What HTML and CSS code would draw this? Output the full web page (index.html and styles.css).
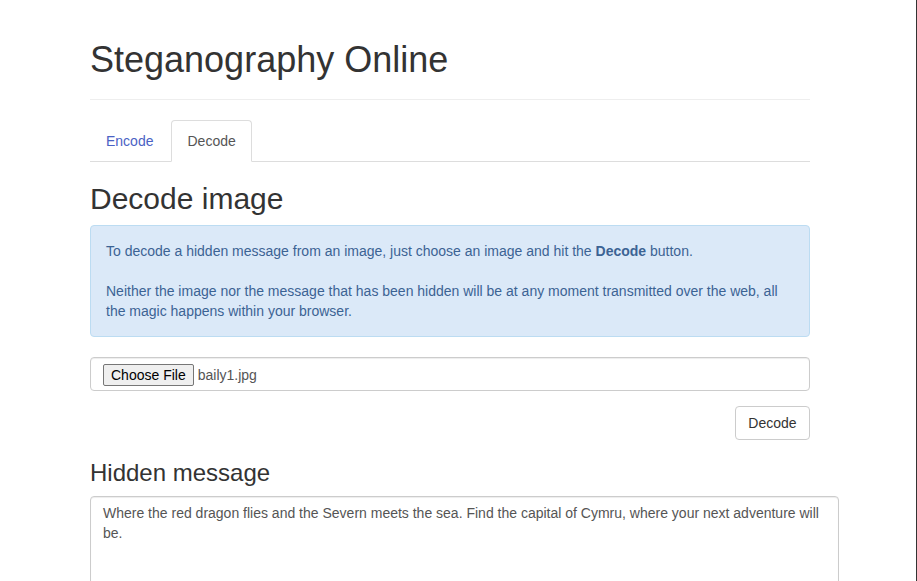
FILE: index.html
```html
<!DOCTYPE html>
<html lang="en">
<head>
<meta charset="utf-8">
<title>Steganography Online</title>
<link rel="stylesheet" href="styles.css">
</head>
<body>
<div class="page">
  <div class="container">
    <div class="page-header">
      <h1>Steganography Online</h1>
    </div>
    <ul class="nav-tabs">
      <li><a href="#" class="tab">Encode</a></li>
      <li><a href="#" class="tab active">Decode</a></li>
    </ul>
    <h2>Decode image</h2>
    <div class="alert">
      To decode a hidden message from an image, just choose an image and hit the <b>Decode</b> button.<br><br>
      Neither the image nor the message that has been hidden will be at any moment transmitted over the web, all the magic happens within your browser.
    </div>
    <div class="form-group">
      <div class="form-control file-control">
        <span class="file-btn">Choose File</span>
        <span class="file-name">baily1.jpg</span>
      </div>
    </div>
    <div class="form-group actions">
      <button class="btn">Decode</button>
    </div>
    <h3>Hidden message</h3>
    <textarea class="form-control message">Where the red dragon flies and the Severn meets the sea. Find the capital of Cymru, where your next adventure will be.</textarea>
  </div>
</div>
</body>
</html>
```
FILE: styles.css
```css
* { box-sizing: border-box; }
html { overflow: hidden; }
body {
  margin: 0;
  min-height: 100vh;
  border-right: 1px solid #333;
  font-family: "Liberation Sans", Arial, sans-serif;
  font-size: 14px;
  line-height: 20px;
  color: #333;
  background: #fff;
}
.page { width: 900px; }
.container { width: 750px; padding: 0 15px; margin: 0 auto; }
.page-header {
  margin: 40px 0 20px;
  padding-bottom: 9px;
  border-bottom: 1px solid #eee;
}
h1, h2, h3 { font-weight: 500; line-height: 1.1; color: #333; }
h1 { font-size: 36px; margin: 0 0 10px; }
h2 { font-size: 30px; margin: 20px 0 10px; }
h3 { font-size: 24px; margin: 20px 0 10px; }
.nav-tabs {
  list-style: none;
  margin: 0;
  padding: 0;
  display: flex;
  border-bottom: 1px solid #ddd;
}
.nav-tabs li { margin-bottom: -1px; margin-right: 2px; }
.tab {
  display: block;
  padding: 10px 15px;
  line-height: 20px;
  border: 1px solid transparent;
  border-radius: 4px 4px 0 0;
  color: #4a62c4;
  text-decoration: none;
}
.tab.active {
  color: #555;
  background: #fff;
  border-color: #ddd #ddd transparent;
}
.alert {
  padding: 15px;
  margin-bottom: 20px;
  border: 1px solid #bcdcf2;
  border-radius: 4px;
  background: #dbe9f8;
  color: #3b6394;
}
.form-group { margin-bottom: 15px; }
.form-control {
  display: block;
  width: 100%;
  height: 34px;
  padding: 6px 12px;
  font: inherit;
  color: #555;
  background: #fff;
  border: 1px solid #ccc;
  border-radius: 4px;
  box-shadow: inset 0 1px 1px rgba(0,0,0,.075);
}
.file-control { display: flex; align-items: center; }
.file-btn {
  display: inline-flex;
  align-items: center;
  height: 22px;
  margin-top: 2px;
  padding: 0 7px;
  background: #efefef;
  border: 1px solid #767676;
  border-radius: 2px;
  color: #000;
  font-size: 14px;
}
.file-name { margin-left: 4px; margin-top: 2px; color: #555; }
.actions { display: flex; justify-content: flex-end; }
.btn {
  height: 34px;
  min-width: 75px;
  padding: 6px 12px;
  font: inherit;
  color: #333;
  background: #fff;
  border: 1px solid #ccc;
  border-radius: 4px;
}
.message {
  width: 749px;
  height: 140px;
  resize: vertical;
  line-height: 20px;
}
```
